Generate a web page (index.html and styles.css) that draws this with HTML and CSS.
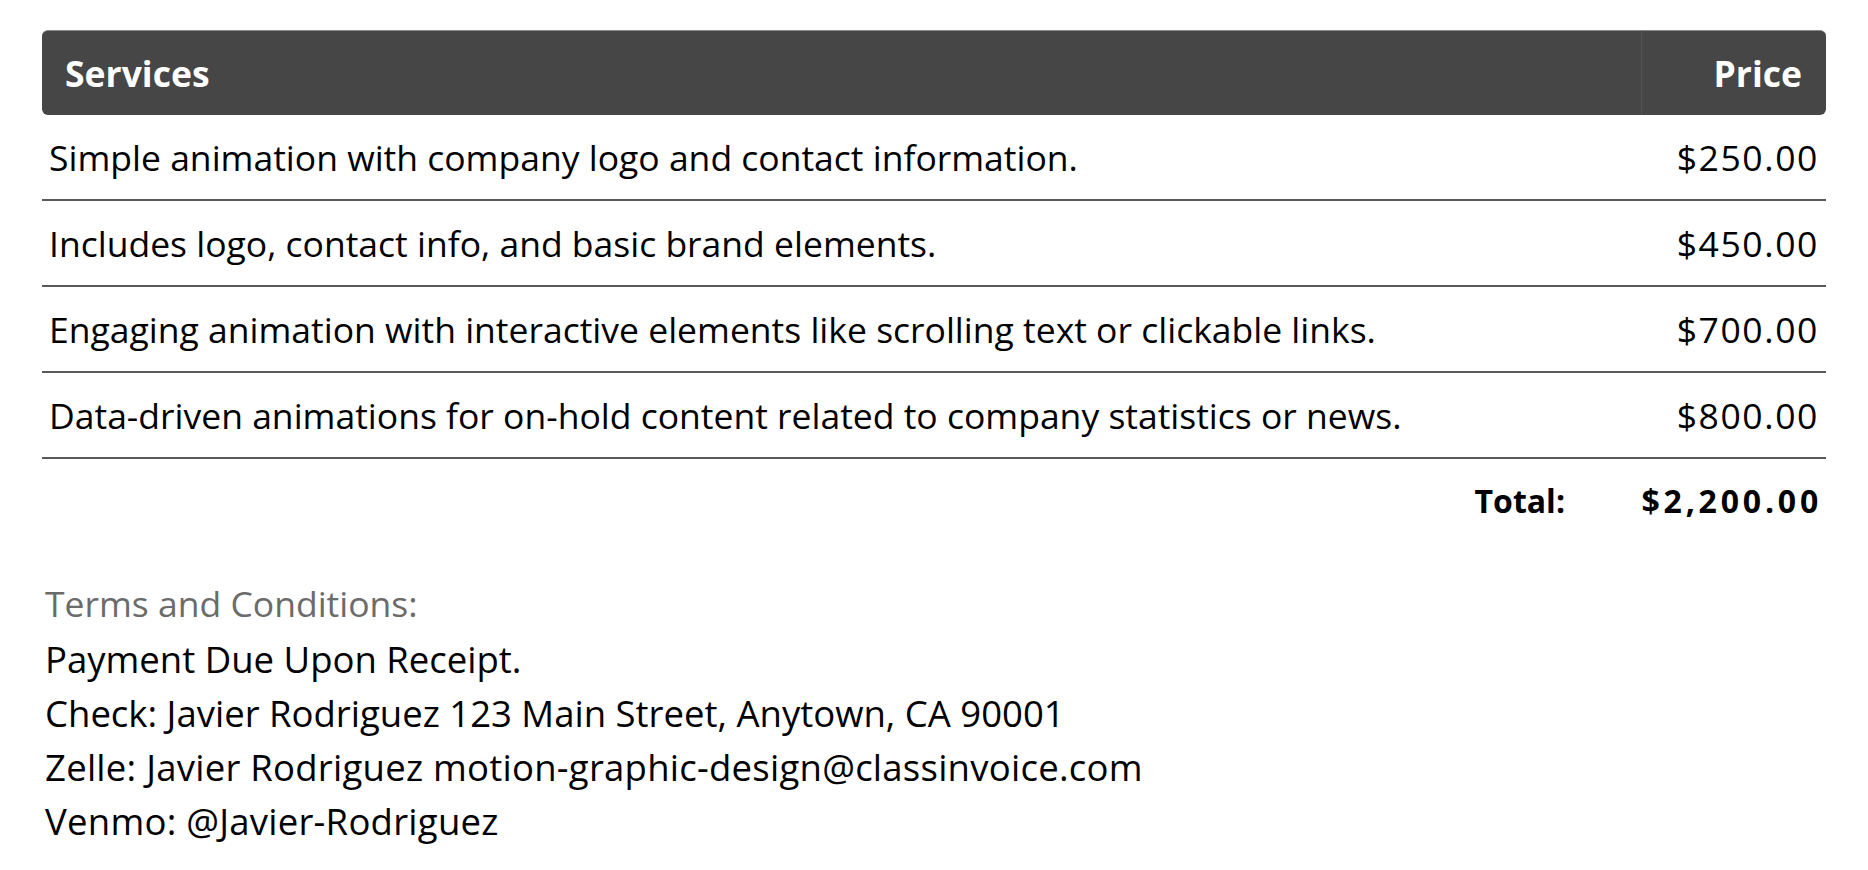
FILE: index.html
```html
<!DOCTYPE html>
<html lang="en">
<head>
<meta charset="utf-8">
<title>Invoice</title>
<link rel="stylesheet" href="styles.css">
</head>
<body>
<main class="invoice">
  <table class="items">
    <colgroup>
      <col class="col-desc">
      <col class="col-price">
    </colgroup>
    <thead>
      <tr>
        <th class="th-desc">Services</th>
        <th class="th-price">Price</th>
      </tr>
    </thead>
    <tbody>
      <tr class="item">
        <td class="desc">Simple animation with company logo and contact information.</td>
        <td class="price">$250.00</td>
      </tr>
      <tr class="item">
        <td class="desc">Includes logo, contact info, and basic brand elements.</td>
        <td class="price">$450.00</td>
      </tr>
      <tr class="item">
        <td class="desc">Engaging animation with interactive elements like scrolling text or clickable links.</td>
        <td class="price">$700.00</td>
      </tr>
      <tr class="item">
        <td class="desc">Data-driven animations for on-hold content related to company statistics or news.</td>
        <td class="price">$800.00</td>
      </tr>
    </tbody>
    <tfoot>
      <tr class="total">
        <td class="total-label">Total:</td>
        <td class="total-value">$2,200.00</td>
      </tr>
    </tfoot>
  </table>

  <section class="terms">
    <h2 class="terms-title">Terms and Conditions:</h2>
    <p>Payment Due Upon Receipt.</p>
    <p>Check: Javier Rodriguez 123 Main Street, Anytown, CA 90001</p>
    <p class="wide">Zelle: Javier Rodriguez motion-graphic-design@classinvoice.com</p>
    <p class="wide">Venmo: @Javier-Rodriguez</p>
  </section>
</main>
</body>
</html>
```

FILE: styles.css
```css
html, body {
  margin: 0;
  padding: 0;
  background: #ffffff;
}

body {
  font-family: "Open Sans", "Noto Sans", sans-serif;
  color: #000;
}

.invoice {
  padding: 30px 42px 0 42px;
}

.items {
  width: 100%;
  table-layout: fixed;
  border-collapse: separate;
  border-spacing: 0;
  font-size: 35.5px;
  font-weight: 500;
}

.col-price {
  width: 185px;
}

.items th {
  background: #464646;
  color: #fff;
  font-size: 35.5px;
  font-weight: 700;
  height: 85px;
  padding: 0 24px 0 23px;
  border-top: 1px solid #8a8a8a;
  box-sizing: border-box;
}

.th-desc {
  text-align: left;
  border-radius: 6px 0 0 6px;
}

.th-price {
  text-align: right;
  border-left: 1px solid #555;
  border-radius: 0 6px 6px 0;
}

.item td {
  height: 86px;
  padding: 0 7px;
  border-bottom: 2px solid #5a5a5a;
  box-sizing: border-box;
}

.desc {
  white-space: nowrap;
}

.price {
  text-align: right;
  letter-spacing: 1.6px;
}

.total td {
  height: 82px;
  font-size: 32px;
  font-weight: 700;
  padding: 0 7px;
  white-space: nowrap;
}

.total-label {
  text-align: right;
  padding-right: 76px !important;
}

.total-value {
  text-align: right;
  letter-spacing: 3.8px;
  padding-left: 0 !important;
  padding-right: 4px !important;
}

.terms {
  padding: 33px 0 0 3px;
  font-size: 36.5px;
  font-weight: 500;
  line-height: 54px;
}

.terms-title {
  margin: 0;
  font-size: 35.5px;
  font-weight: 500;
  color: #6b6b6b;
  line-height: 58px;
}

.terms p {
  margin: 0;
}

.terms .wide {
  letter-spacing: 0.25px;
}
```
